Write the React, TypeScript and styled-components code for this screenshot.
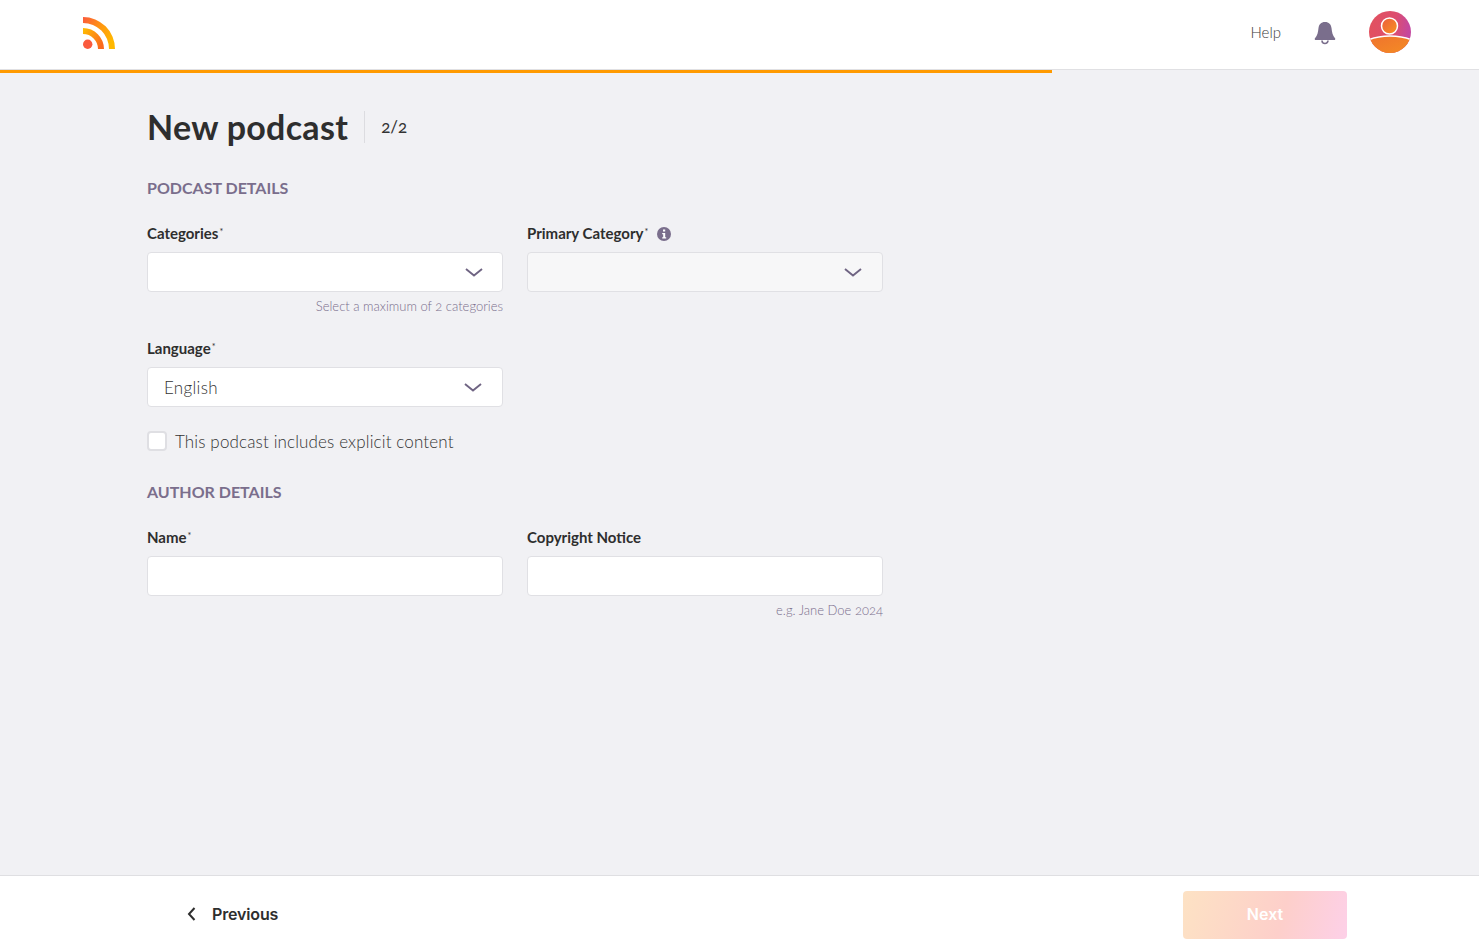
import React from "react";
import styled, { createGlobalStyle } from "styled-components";

const Global = createGlobalStyle`
  html, body { margin: 0; padding: 0; background: #f1f1f4; }
  body { font-family: "Lato", "Open Sans", sans-serif; color: #2e2e2e; font-variant-numeric: oldstyle-nums; }
  * { box-sizing: border-box; }
`;

const Page = styled.div`
  display: flex;
  flex-direction: column;
  height: 951px;
  overflow: hidden;
`;
const Header = styled.header`
  flex: none;
  height: 70px;
  background: #fff;
  border-bottom: 1px solid #e0e0e3;
  display: flex;
  align-items: center;
  padding: 0 68px 4px 83px;
`;
const Logo = styled.svg`
  width: 32px;
  height: 32px;
  display: block;
  margin-top: 1px;
`;
const HeaderRight = styled.div`
  margin-left: auto;
  display: flex;
  align-items: center;
`;
const HelpLink = styled.a`
  font-size: 15px;
  font-weight: 300;
  color: #3c3c3c;
  margin-right: 33px;
  padding-bottom: 2px;
`;
const Bell = styled.svg`
  width: 22px;
  height: 23px;
  display: block;
  margin-right: 33px;
  margin-top: 1px;
`;
const Avatar = styled.svg`
  width: 42px;
  height: 42px;
  display: block;
  margin-top: -2px;
`;
const Progress = styled.div`
  flex: none;
  height: 3px;
  width: 1052px;
  background: #ff9a00;
`;
const Main = styled.main`
  flex: 1;
  padding: 36px 0 0 147px;
`;
const TitleRow = styled.div`
  display: flex;
  align-items: center;
  height: 36px;
`;
const Title = styled.h1`
  margin: 0;
  font-size: 34px;
  line-height: 36px;
  letter-spacing: 0.3px;
  font-weight: 700;
  color: #2e2e2e;
  padding-right: 16px;
  border-right: 1px solid #dcdce0;
  height: 32px;
  display: flex;
  align-items: center;
`;
const Step = styled.span`
  margin-left: 16px;
  padding-bottom: 2px;
  font-size: 17px;
  font-weight: 400;
  color: #333;
`;
const SectionTitle = styled.h2<{ $top: number }>`
  margin: ${(p) => p.$top}px 0 0;
  font-size: 16px;
  line-height: 20px;
  font-weight: 700;
  color: #7a6e8c;
  text-transform: uppercase;
`;
const FormGrid = styled.div`
  display: grid;
  grid-template-columns: 356px 356px;
  column-gap: 24px;
  margin-top: 25px;
`;
const Field = styled.div``;
const Label = styled.label`
  display: flex;
  align-items: center;
  height: 19px;
  font-size: 15px;
  font-weight: 700;
  color: #2e2e2e;
  margin-bottom: 10px;
`;
const Star = styled.sup`
  font-size: 9px;
  font-weight: 400;
  line-height: 0;
  margin-left: 1px;
  align-self: flex-start;
  margin-top: 9px;
`;
const InfoIcon = styled.svg`
  width: 14px;
  height: 14px;
  margin-left: 9px;
  margin-top: 3px;
  display: block;
`;
const Select = styled.div<{ $disabled?: boolean; $arrowInset?: number }>`
  height: 40px;
  border: 1px solid #e0e0e4;
  border-radius: 4px;
  background: ${(p) => (p.$disabled ? "#f7f7f8" : "#fff")};
  display: flex;
  align-items: center;
  justify-content: space-between;
  padding: 0 ${(p) => p.$arrowInset ?? 19}px 0 16px;
  font-size: 17px;
  font-weight: 300;
  letter-spacing: 0.3px;
  color: #333;
`;
const Chevron = styled.svg`
  width: 18px;
  height: 9px;
  display: block;
  margin-left: auto;
`;
const TextInput = styled.input`
  display: block;
  width: 100%;
  height: 40px;
  border: 1px solid #e0e0e4;
  border-radius: 4px;
  background: #fff;
  outline: none;
  padding: 0 16px;
`;
const Hint = styled.div`
  text-align: right;
  font-size: 13px;
  line-height: 16px;
  margin-top: 6px;
  font-weight: 300;
  color: #7a6e8c;
`;
const LanguageField = styled.div`
  width: 356px;
  margin-top: 24px;
`;
const CheckRow = styled.label`
  display: flex;
  align-items: center;
  gap: 8px;
  margin-top: 24px;
  height: 20px;
  font-size: 17px;
  font-weight: 300;
  letter-spacing: 0.14px;
  color: #333;
`;
const CheckBox = styled.span`
  width: 20px;
  height: 20px;
  border: 2px solid #dfdfe3;
  border-radius: 4px;
  background: #fff;
  flex: none;
`;
const Footer = styled.footer`
  flex: none;
  height: 76px;
  background: #fff;
  border-top: 1px solid #dfdfe2;
  display: flex;
  align-items: center;
  justify-content: space-between;
  padding: 0 132px 0 187px;
`;
const BackButton = styled.button`
  border: 0;
  background: none;
  padding: 0;
  display: flex;
  align-items: center;
  gap: 16px;
  font: 600 16px "Inter", sans-serif;
  letter-spacing: -0.15px;
  color: #2e2e2e;
`;
const NextButton = styled.button`
  width: 164px;
  height: 48px;
  margin-top: 2px;
  padding: 0 0 2px;
  border: 0;
  border-radius: 4px;
  background: linear-gradient(105deg, #fde2c4 0%, #fdcfca 60%, #fdd0e8 100%);
  color: #fff;
  font: 600 16px "Inter", sans-serif;
`;

const Arrow = () => (
  <Chevron viewBox="0 0 18 9" fill="none" stroke="#6f6483" strokeWidth="1.9">
    <path d="M1 1 9 7.600 17 1" />
  </Chevron>
);

export default function App() {
  return (
    <Page>
      <Global />
      <Header>
        <Logo viewBox="0 0 32 32">
          <defs>
            <linearGradient id="outer" x1="0" y1="0" x2="1" y2="0.6">
              <stop offset="0" stopColor="#fb5a3c" />
              <stop offset="0.55" stopColor="#ff9810" />
              <stop offset="1" stopColor="#ffb800" />
            </linearGradient>
            <linearGradient id="inner" x1="0" y1="0" x2="1" y2="0.6">
              <stop offset="0" stopColor="#ffbe00" />
              <stop offset="1" stopColor="#fb6a1e" />
            </linearGradient>
          </defs>
          <path d="M0 0A32 32 0 0 1 32 32H26A26 26 0 0 0 0 6Z" fill="url(#outer)" />
          <path d="M0 11A21 21 0 0 1 21 32H15A15 15 0 0 0 0 17Z" fill="url(#inner)" />
          <circle cx="4.700" cy="27.300" r="4.700" fill="#fa5a3e" />
        </Logo>
        <HeaderRight>
          <HelpLink>Help</HelpLink>
          <Bell viewBox="0 0 22 23">
            <path
              d="M11 0C15 0 17 2.500 17.500 6 18 10.500 18.500 13.500 21 16.200 21.700 17 21.200 18 20 18H2C.8 18 .3 17 1 16.200 3.500 13.500 4 10.500 4.500 6 5 2.500 7 0 11 0Z"
              fill="#7a6e8c"
            />
            <path d="M8 18.500a3 3 0 0 0 6 0" fill="none" stroke="#7a6e8c" strokeWidth="1.600" />
          </Bell>
          <Avatar viewBox="0 0 42 42">
            <defs>
              <linearGradient id="avTop" x1="0" y1="0" x2="1" y2="0.15">
                <stop offset="0" stopColor="#e3515d" />
                <stop offset="0.65" stopColor="#dc4e6f" />
                <stop offset="1" stopColor="#c4489f" />
              </linearGradient>
              <linearGradient id="avHead" x1="0" y1="0" x2="1" y2="1">
                <stop offset="0" stopColor="#ec5c3e" />
                <stop offset="1" stopColor="#f8951f" />
              </linearGradient>
              <linearGradient id="avBody" x1="0" y1="0" x2="0.6" y2="1">
                <stop offset="0" stopColor="#ee6d30" />
                <stop offset="1" stopColor="#f8a21c" />
              </linearGradient>
              <clipPath id="avClip">
                <circle cx="21" cy="21" r="21" />
              </clipPath>
            </defs>
            <circle cx="21" cy="21" r="21" fill="url(#avTop)" />
            <g clipPath="url(#avClip)">
              <ellipse cx="21" cy="50" rx="40" ry="25" fill="url(#avBody)" stroke="#fff" strokeWidth="1.500" />
            </g>
            <circle cx="20.500" cy="15" r="8" fill="url(#avHead)" stroke="#fff" strokeWidth="1.500" />
          </Avatar>
        </HeaderRight>
      </Header>
      <Progress />
      <Main>
        <TitleRow>
          <Title>New podcast</Title>
          <Step>2/2</Step>
        </TitleRow>
        <SectionTitle $top={33}>Podcast details</SectionTitle>
        <FormGrid>
          <Field>
            <Label>
              Categories<Star>*</Star>
            </Label>
            <Select>
              <Arrow />
            </Select>
            <Hint>Select a maximum of 2 categories</Hint>
          </Field>
          <Field>
            <Label>
              Primary Category<Star>*</Star>
              <InfoIcon viewBox="0 0 14 14">
                <circle cx="7" cy="7" r="7" fill="#7a6e8c" />
                <rect x="6" y="2.500" width="2.200" height="2" fill="#fff" />
                <path d="M5.200 6h3v4.200h1v1.200H5.200v-1.200h1V7.200h-1Z" fill="#fff" />
              </InfoIcon>
            </Label>
            <Select $disabled $arrowInset={20}>
              <Arrow />
            </Select>
          </Field>
        </FormGrid>
        <LanguageField>
          <Label>
            Language<Star>*</Star>
          </Label>
          <Select $arrowInset={20}>
            English
            <Arrow />
          </Select>
        </LanguageField>
        <CheckRow>
          <CheckBox />
          This podcast includes explicit content
        </CheckRow>
        <SectionTitle $top={31}>Author details</SectionTitle>
        <FormGrid>
          <Field>
            <Label>
              Name<Star>*</Star>
            </Label>
            <TextInput />
          </Field>
          <Field>
            <Label>Copyright Notice</Label>
            <TextInput />
            <Hint>e.g. Jane Doe 2024</Hint>
          </Field>
        </FormGrid>
      </Main>
      <Footer>
        <BackButton>
          <svg width="9" height="14" viewBox="0 0 9 14" fill="none" stroke="#2e2e2e" strokeWidth="2">
            <path d="M7.500 1 2 7l5.500 6" />
          </svg>
          Previous
        </BackButton>
        <NextButton>Next</NextButton>
      </Footer>
    </Page>
  );
}
